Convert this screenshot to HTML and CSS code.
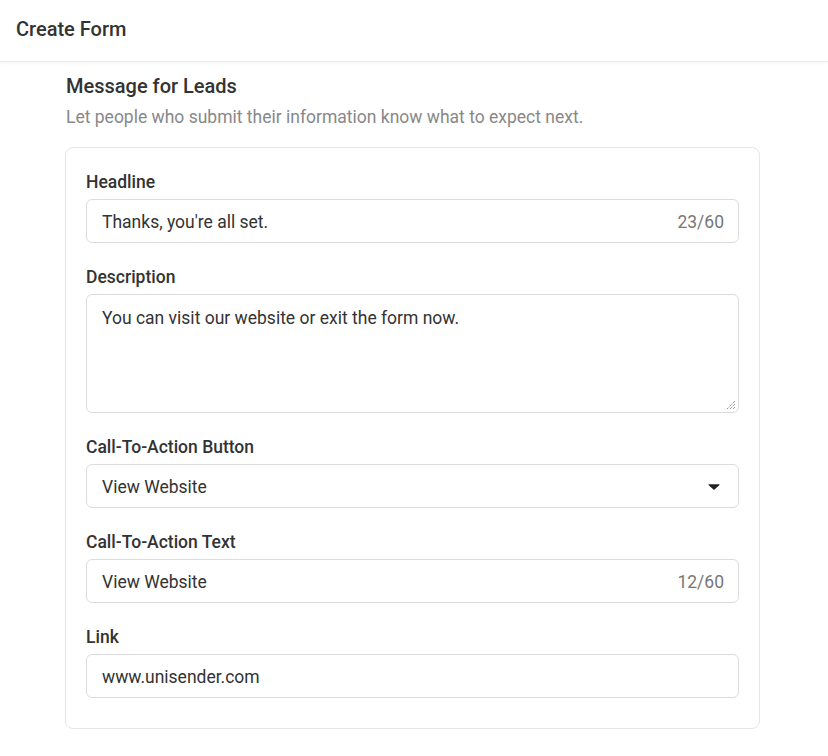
FILE: index.html
```html
<!DOCTYPE html>
<html>
<head>
<meta charset="utf-8">
<link rel="stylesheet" href="styles.css">
</head>
<body>
<header class="topbar">Create Form</header>
<main class="content">
  <h2 class="title">Message for Leads</h2>
  <p class="subtitle">Let people who submit their information know what to expect next.</p>
  <section class="card">
    <div class="field">
      <label class="label">Headline</label>
      <div class="input"><span class="value">Thanks, you're all set.</span><span class="count">23/60</span></div>
    </div>
    <div class="field">
      <label class="label">Description</label>
      <div class="textarea"><span class="value">You can visit our website or exit the form now.</span>
        <svg class="grip" width="10" height="10" viewBox="0 0 10 10"><path d="M9 1L1 9M9 4L4 9M9 7L7 9" stroke="#666" stroke-width="1" stroke-dasharray="1 1" fill="none"/></svg>
      </div>
    </div>
    <div class="field">
      <label class="label">Call-To-Action Button</label>
      <div class="input"><span class="value">View Website</span>
        <svg class="caret" width="12" height="8" viewBox="0 0 12 8"><path d="M1.2 1.2h9.6c.6 0 .9.6.5 1L6.5 6.6c-.3.3-.7.3-1 0L.7 2.2c-.4-.4-.1-1 .5-1z" fill="#222"/></svg>
      </div>
    </div>
    <div class="field">
      <label class="label">Call-To-Action Text</label>
      <div class="input"><span class="value">View Website</span><span class="count">12/60</span></div>
    </div>
    <div class="field">
      <label class="label">Link</label>
      <div class="input"><span class="value">www.unisender.com</span></div>
    </div>
  </section>
</main>
</body>
</html>
```
FILE: styles.css
```css
* { box-sizing: border-box; }
html, body { margin: 0; padding: 0; background: #fff; }
body { font-family: Roboto, "Liberation Sans", sans-serif; color: #333; }
.topbar {
  height: 62px;
  display: flex;
  align-items: center;
  padding: 0 16px 3px;
  font-size: 20px;
  font-weight: 500;
  color: #333;
  border-bottom: 1px solid #ececec;
  box-shadow: 0 1px 3px rgba(0,0,0,0.05);
}
.content { width: 695px; margin-left: 65px; }
.title {
  margin: 13px 0 0 1px;
  font-size: 20px;
  font-weight: 500;
  line-height: 22px;
  color: #333;
}
.subtitle {
  margin: 10px 0 0 1px;
  font-size: 17.5px;
  line-height: 20px;
  color: #888;
}
.card {
  margin-top: 20px;
  border: 1px solid #e6e6e6;
  border-radius: 8px;
  padding: 24px 20px 30px;
  display: flex;
  flex-direction: column;
  gap: 24px;
}
.field { display: flex; flex-direction: column; }
.label {
  font-size: 17.5px;
  font-weight: 500;
  line-height: 20px;
  color: #333;
  margin-bottom: 7px;
}
.input, .textarea {
  border: 1px solid #dcdcdc;
  border-radius: 6px;
  padding: 0 14px 0 15px;
  font-size: 17.5px;
  color: #333;
}
.input {
  height: 44px;
  padding-top: 1px;
  display: flex;
  align-items: center;
  justify-content: space-between;
}
.textarea {
  height: 119px;
  padding-top: 13px;
  position: relative;
  line-height: 20px;
}
.grip { position: absolute; right: 2px; bottom: 2px; }
.count { color: #777; }
.caret { margin-right: 4px; }
```
